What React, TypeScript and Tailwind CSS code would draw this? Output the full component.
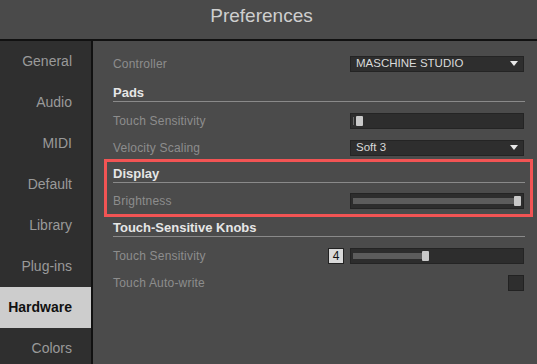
import type { ReactNode } from 'react';

const navItems = ['General', 'Audio', 'MIDI', 'Default', 'Library', 'Plug-ins', 'Hardware', 'Colors'];

function Dropdown({ value }: { value: string }) {
  return (
    <div className="w-[174px] h-[16px] bg-[#2e2e2e] border border-[#242424] flex items-center justify-between pl-[5px] pr-[5px]">
      <span className="text-[11.5px] text-[#dadada] leading-none">{value}</span>
      <svg width="8" height="5" viewBox="0 0 8 5">
        <path d="M0 0 L8 0 L4 5 Z" fill="#e8e8e8" />
      </svg>
    </div>
  );
}

function Slider({ fill, track = true }: { fill: number; track?: boolean }) {
  return (
    <div className="w-[174px] h-[16px] bg-[#2d2d2d] border border-[#242424] flex items-center pl-[2px] pr-[2px]">
      {track ? (
        <div className="h-[6px] bg-[#5c5c5c]" style={{ width: fill }} />
      ) : (
        <div className="h-[8px] bg-[#6a6a6a] mr-[2px]" style={{ width: fill }} />
      )}
      <div className="w-[7px] h-[10px] bg-[#c9c9c9] rounded-[1px]" />
    </div>
  );
}

function Row({ label, children }: { label: string; children?: ReactNode }) {
  return (
    <div className="h-[27px] flex items-center justify-between">
      <span className="text-[12px] text-[#8d8d8d] tracking-[0.2px]">{label}</span>
      <div className="flex items-center gap-[6px] mr-[1px]">{children}</div>
    </div>
  );
}

function Header({ title, h, pb }: { title: string; h: string; pb: string }) {
  return (
    <div className={`${h} ${pb} flex items-end border-b border-[#8a8a8a]`}>
      <span className="text-[13px] font-bold text-[#e6e6e6] leading-[15px]">{title}</span>
    </div>
  );
}

export default function App() {
  return (
    <div className="w-[537px] h-[364px] overflow-hidden flex flex-col bg-[#4b4b4b]" style={{ fontFamily: '"Liberation Sans", Arial, sans-serif' }}>
      <div className="h-[41px] shrink-0 bg-[#4a4a4a] border-b-2 border-[#111111] flex items-center justify-center pr-[14px]">
        <span className="text-[19px] text-[#cfcfcf] -mt-[6px]">Preferences</span>
      </div>

      <div className="flex flex-1 min-h-0">
        <div className="w-[93px] shrink-0 bg-[#2f2f2f] border-r-2 border-[#111111] flex flex-col">
          {navItems.map(item => (
            <div
              key={item}
              className={`h-[41px] shrink-0 flex items-center justify-end pr-[19px] text-[14px] ${item === 'Hardware' ? 'bg-[#cdcdcd] text-[#111111] font-bold pr-[18px]' : 'text-[#9a9a9a]'}`}
            >
              {item}
            </div>
          ))}
        </div>

        <div className="flex-1 pl-[20px] pr-[12px] pt-[9px]">
          <Row label="Controller">
            <Dropdown value="MASCHINE STUDIO" />
          </Row>

          <Header title="Pads" h="h-[25px]" pb="pb-[1px]" />
          <div className="mt-[5px]">
            <Row label="Touch Sensitivity">
              <Slider fill={1} track={false} />
            </Row>
            <Row label="Velocity Scaling">
              <Dropdown value="Soft 3" />
            </Row>
          </div>

          <div className="-mt-[2px] -ml-[9px] -mr-[8px] pl-[6px] pr-[5px] border-[3px] border-[#f25454]">
            <Header title="Display" h="h-[21px]" pb="pb-[1px]" />
            <div className="mt-[4px]">
              <Row label="Brightness">
                <Slider fill={161} />
              </Row>
            </div>
          </div>

          <Header title="Touch-Sensitive Knobs" h="h-[20px]" pb="pb-[1px]" />
          <div className="mt-[5px]">
            <Row label="Touch Sensitivity">
              <div className="w-[16px] h-[16px] bg-[#d9d9d9] border border-[#222222] flex items-center justify-center text-[12px] text-[#111111] leading-none">4</div>
              <Slider fill={69} />
            </Row>
            <Row label="Touch Auto-write">
              <div className="w-[16px] h-[16px] bg-[#2e2e2e] border border-[#222222]" />
            </Row>
          </div>
        </div>
      </div>
    </div>
  );
}
